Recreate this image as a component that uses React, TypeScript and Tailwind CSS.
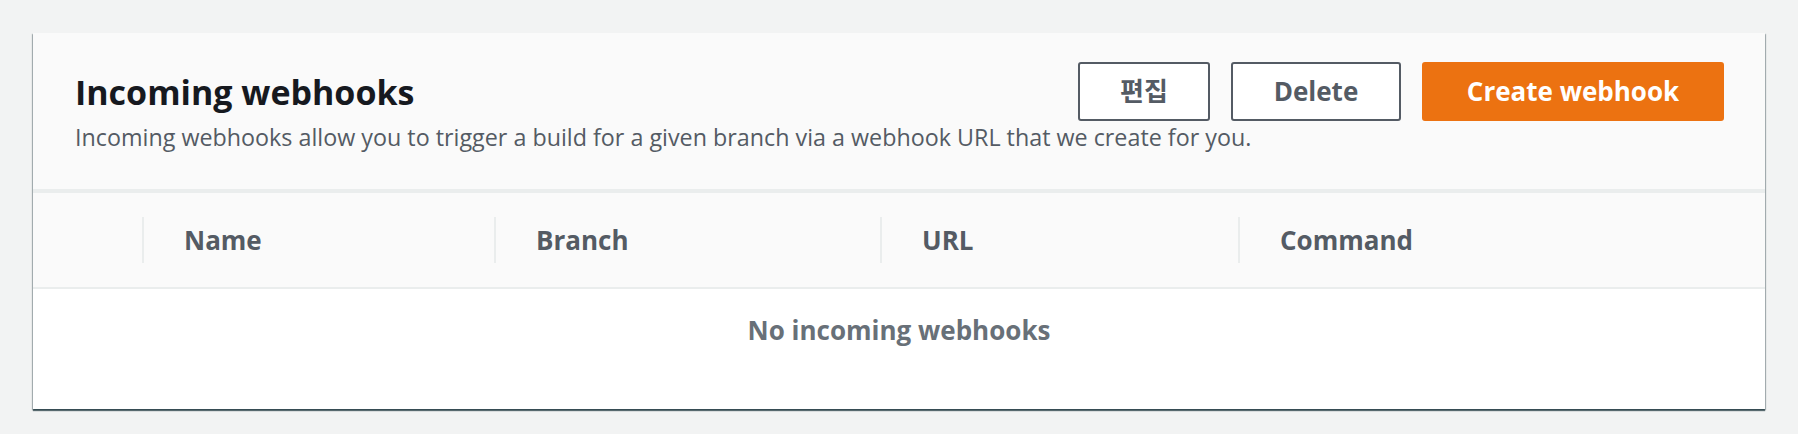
import React from 'react';

/* ── Table columns ── */
const COLUMNS = ['Name', 'Branch', 'URL', 'Command'];

export default function App() {
  return (
    <div className="min-h-screen bg-[#f2f3f3] px-[33px] pt-[33px] font-[family-name:'Open_Sans','Noto_Sans_CJK_KR',sans-serif]">
      <div className="bg-white shadow-[0_2px_1px_0_rgba(0,28,36,0.6),1px_1px_1px_0_rgba(0,28,36,0.25),-1px_1px_1px_0_rgba(0,28,36,0.25)]">
        {/* ── Header ── */}
        <div className="bg-[#fafafa] pl-[42px] pr-[41px] pt-[29px] pb-[36px]">
          <div className="flex items-start justify-between">
            <h2 className="pt-[9px] text-[34px] leading-[42px] font-bold text-[#16191f]">Incoming webhooks</h2>

            <div className="flex gap-[21px]">
              <button className="flex h-[59px] w-[132px] items-center justify-center rounded-[3px] border-2 border-[#545b64] bg-white text-[26px] font-bold text-[#545b64]">
                편집
              </button>
              <button className="flex h-[59px] w-[170px] items-center justify-center rounded-[3px] border-2 border-[#545b64] bg-white text-[26px] font-bold text-[#545b64]">
                Delete
              </button>
              <button className="flex h-[59px] w-[302px] items-center justify-center rounded-[3px] border-2 border-[#ec7211] bg-[#ec7211] text-[26px] font-bold text-white">
                Create webhook
              </button>
            </div>
          </div>
          <p className="text-[23.3px] leading-[32px] text-[#545b64]">
            Incoming webhooks allow you to trigger a build for a given branch via a webhook URL that we create for you.
          </p>
        </div>

        <div className="h-[4px] bg-[#eaeded]" />

        {/* ── Table head ── */}
        <div className="grid h-[96px] grid-cols-[109px_352px_386px_358px_1fr] items-center border-b-2 border-[#eaeded] bg-[#fafafa]">
          <div />
          {COLUMNS.map((col) => (
            <div key={col} className="flex h-[46px] items-center border-l-2 border-[#eaeded] pl-[40px]">
              <span className="text-[26px] leading-[32px] font-bold text-[#545b64]">{col}</span>
            </div>
          ))}
        </div>

        {/* ── Empty state ── */}
        <div className="bg-white pt-[25px] pb-[63px] text-center">
          <p className="text-[26px] leading-[32px] font-bold text-[#687078]">No incoming webhooks</p>
        </div>
      </div>
    </div>
  );
}
